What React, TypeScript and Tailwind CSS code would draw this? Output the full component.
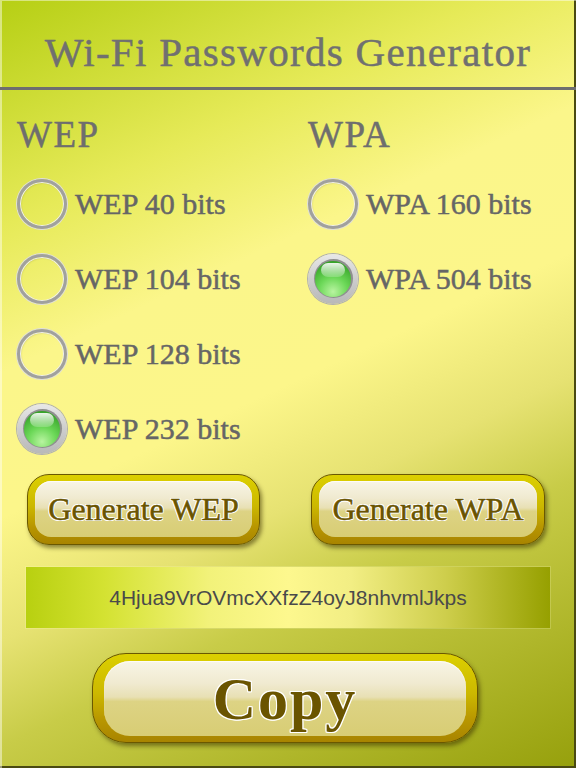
import React from "react";

const serif = "font-['Liberation_Serif','Times_New_Roman',serif]";

function Radio({ checked, label }: { checked?: boolean; label: string }) {
  return (
    <div className="h-[75px] flex items-center gap-[8px]">
      {checked ? (
        <div className="w-[50px] h-[50px] rounded-full flex items-center justify-center bg-[linear-gradient(180deg,#e8e8e8_0%,#cdcdcd_50%,#b8b8b8_100%)] shadow-[0_0_0_1px_#b0b0b0]">
          <div className="w-[39px] h-[39px] rounded-full flex items-center justify-center bg-[#8f8f8f]">
            <div className="relative w-[36px] h-[36px] rounded-full bg-[radial-gradient(circle_at_50%_85%,#b8f4a0_0%,#6cd858_40%,#3aa82c_80%,#2c8a20_100%)]">
              <div className="absolute top-[2px] left-[6px] w-[24px] h-[14px] rounded-full bg-[linear-gradient(180deg,rgba(255,255,255,0.9)_0%,rgba(255,255,255,0.2)_100%)]" />
            </div>
          </div>
        </div>
      ) : (
        <div className="w-[50px] h-[50px] rounded-full border-[3px] border-[#a0a0a0] shadow-[0_0_0_1px_#dedede,inset_0_0_0_1px_#efefef,inset_1px_1px_2px_rgba(0,0,0,0.15)]" />
      )}
      <span className={`${serif} text-[30px] leading-none text-[#666666] [-webkit-text-stroke:0.5px_#666666]`}>{label}</span>
    </div>
  );
}

function GoldButton({
  label,
  className,
  textClass,
  outerRadius,
  innerRadius,
  pad,
}: {
  label: string;
  className: string;
  textClass: string;
  outerRadius: string;
  innerRadius: string;
  pad: string;
}) {
  return (
    <div
      className={`${className} ${outerRadius} ${pad} flex bg-[linear-gradient(180deg,#dcd000_0%,#ccb800_45%,#b89600_75%,#a88400_100%)] border border-[#6a5800] shadow-[2px_3px_4px_rgba(60,50,0,0.55)]`}
    >
      <div
        className={`flex-1 ${innerRadius} flex items-center justify-center bg-[linear-gradient(180deg,#f8f5e6_0%,#f0ead0_30%,#e8e0b4_48%,#ddd384_54%,#d8cd74_100%)] shadow-[inset_0_1px_1px_rgba(255,255,255,0.8)]`}
      >
        <span
          className={`${textClass} leading-none text-[#6a5400] [text-shadow:1px_1px_0_#fff,-1px_-1px_0_#fff,1px_-1px_0_#fff,-1px_1px_0_#fff,0_1px_0_#fff,0_-1px_0_#fff,1px_0_0_#fff,-1px_0_0_#fff]`}
        >
          {label}
        </span>
      </div>
    </div>
  );
}

export default function App() {
  return (
    <div className="w-[576px] h-[768px] overflow-hidden flex flex-col bg-[linear-gradient(155deg,#b6cf14_0%,#e6ea58_22%,#fbf68a_36%,#fcf68a_50%,#e6e272_62%,#c8cc48_72%,#96a00c_100%)] shadow-[inset_2px_1px_0_rgba(255,255,255,0.45),inset_-2px_-2px_0_#4a4a12]">
      <div className="h-[87px] flex items-center justify-center pt-[18px]">
        <h1 className={`${serif} text-[41px] leading-none tracking-[1.3px] text-[#707070] [-webkit-text-stroke:0.5px_#707070]`}>
          Wi-Fi Passwords Generator
        </h1>
      </div>
      <div className="h-[3px] bg-[#6e6e6e]" />

      <div className="grid grid-cols-[291px_1fr] pl-[17px]">
        <div className="flex flex-col">
          <div className="mt-[19px] mb-[7px] h-[50px] flex items-center">
            <span className={`${serif} text-[37px] leading-none tracking-[1.5px] text-[#6e6e6e] [-webkit-text-stroke:0.5px_#6e6e6e]`}>WEP</span>
          </div>
          <Radio label="WEP 40 bits" />
          <Radio label="WEP 104 bits" />
          <Radio label="WEP 128 bits" />
          <Radio label="WEP 232 bits" checked />
        </div>
        <div className="flex flex-col">
          <div className="mt-[19px] mb-[7px] h-[50px] flex items-center">
            <span className={`${serif} text-[37px] leading-none tracking-[1.5px] text-[#6e6e6e] [-webkit-text-stroke:0.5px_#6e6e6e]`}>WPA</span>
          </div>
          <Radio label="WPA 160 bits" />
          <Radio label="WPA 504 bits" checked />
        </div>
      </div>

      <div className="flex mt-[8px]">
        <GoldButton
          label="Generate WEP"
          className="ml-[27px] w-[233px] h-[71px]"
          outerRadius="rounded-[22px]"
          innerRadius="rounded-[16px]"
          pad="px-[7px] pt-[6px] pb-[7px]"
          textClass={`${serif} text-[32px] [-webkit-text-stroke:0.5px_#6a5400]`}
        />
        <GoldButton
          label="Generate WPA"
          className="ml-[51px] w-[234px] h-[71px]"
          outerRadius="rounded-[22px]"
          innerRadius="rounded-[16px]"
          pad="px-[7px] pt-[6px] pb-[7px]"
          textClass={`${serif} text-[32px] [-webkit-text-stroke:0.5px_#6a5400]`}
        />
      </div>

      <div className="mt-[22px] ml-[26px] w-[524px] h-[61px] flex items-center justify-center bg-[linear-gradient(90deg,#b8d010_0%,#d4e232_15%,#f2f27a_35%,#fdf88e_50%,#f2ee84_62%,#cece4c_80%,#96a000_100%)] shadow-[0_0_0_1px_rgba(255,255,200,0.2)]">
        <span className="font-['Liberation_Sans',Arial,sans-serif] text-[21px] leading-none text-[#4a4a4a]">
          4Hjua9VrOVmcXXfzZ4oyJ8nhvmlJkps
        </span>
      </div>

      <div className="mt-[25px] ml-[92px] flex">
        <GoldButton
          label="Copy"
          className="w-[386px] h-[90px]"
          outerRadius="rounded-[34px]"
          innerRadius="rounded-[26px]"
          pad="px-[11px] pt-[7px] pb-[6px]"
          textClass={`${serif} text-[60px] font-bold tracking-[2px]`}
        />
      </div>
    </div>
  );
}
